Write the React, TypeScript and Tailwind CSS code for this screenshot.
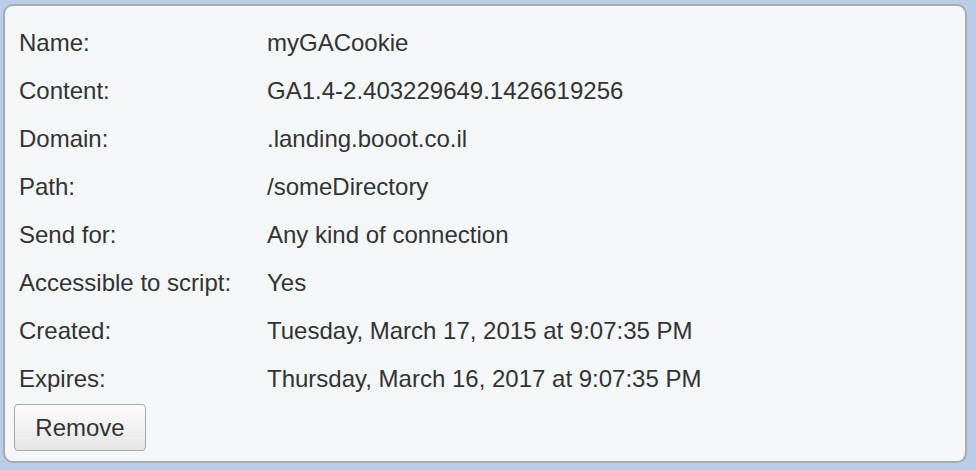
const rows: [string, string][] = [
  ["Name:", "myGACookie"],
  ["Content:", "GA1.4-2.403229649.1426619256"],
  ["Domain:", ".landing.booot.co.il"],
  ["Path:", "/someDirectory"],
  ["Send for:", "Any kind of connection"],
  ["Accessible to script:", "Yes"],
  ["Created:", "Tuesday, March 17, 2015 at 9:07:35 PM"],
  ["Expires:", "Thursday, March 16, 2017 at 9:07:35 PM"],
];

export default function App() {
  return (
    <div
      className="w-[976px] h-[470px] bg-[#bacde8] pt-[4px] pl-[3px]"
      style={{ fontFamily: '"Liberation Sans", Arial, sans-serif' }}
    >
      <div className="w-[964px] h-[459px] bg-[#f4f7f8] border-2 border-[#aaaaaa] rounded-[10px] pt-[13px] pl-[14px] text-[24px] text-[#333333]">
        {rows.map(([label, value]) => (
          <div key={label} className="flex items-center h-[48px] leading-none">
            <div className="w-[248px] shrink-0">{label}</div>
            <div>{value}</div>
          </div>
        ))}
        <button className="mt-[1px] -ml-[5px] w-[132px] h-[47px] border border-[#a8a8a8] rounded-[4px] bg-gradient-to-b from-[#fbfbfb] to-[#e6e6e6] text-[#333333] text-[24px] leading-none">
          Remove
        </button>
      </div>
    </div>
  );
}
